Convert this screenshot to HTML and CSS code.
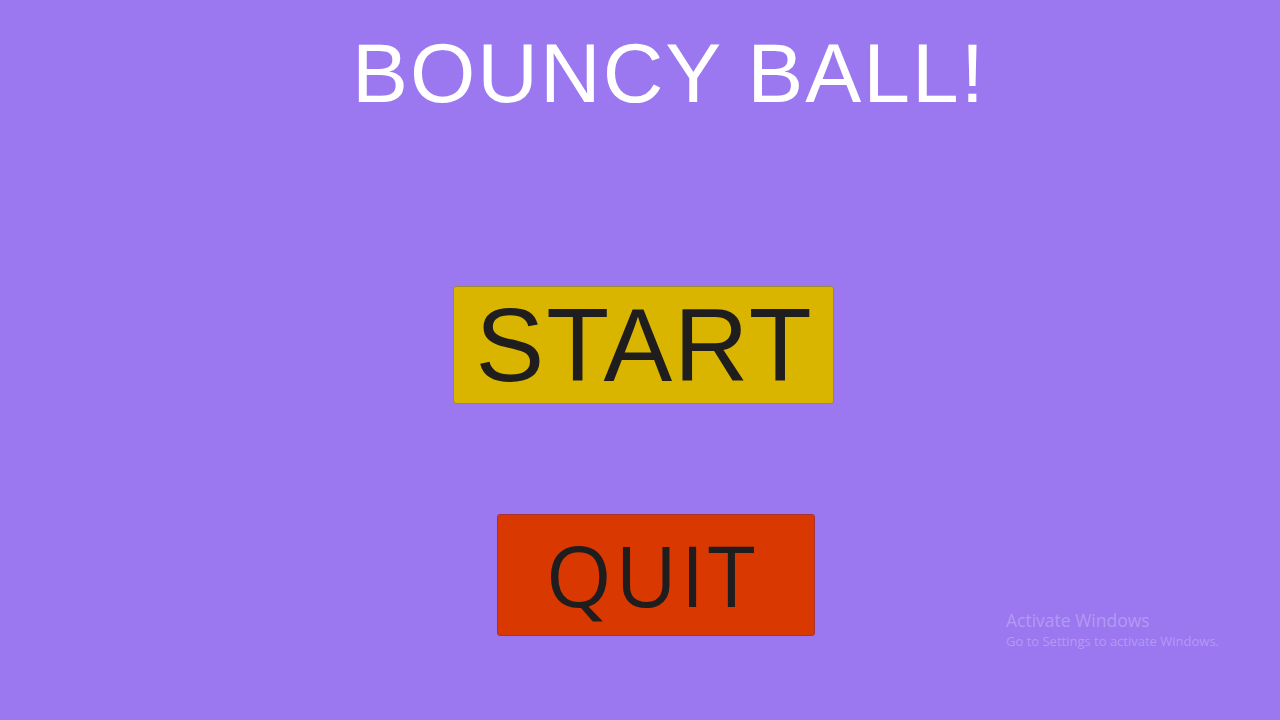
FILE: index.html
```html
<!DOCTYPE html>
<html>
<head>
<meta charset="utf-8">
<link rel="stylesheet" href="styles.css">
</head>
<body>
<main class="menu">
  <h1 class="title">BOUNCY BALL!</h1>
  <button class="btn btn-start">START</button>
  <button class="btn btn-quit">QUIT</button>
</main>
<div class="watermark">
  <div class="wm-title">Activate Windows</div>
  <div class="wm-sub">Go to Settings to activate Windows.</div>
</div>
</body>
</html>
```
FILE: styles.css
```css
html, body {
  margin: 0;
  padding: 0;
  width: 1280px;
  height: 720px;
  overflow: hidden;
  background: #9b78f0;
  font-family: "Liberation Sans", Arial, sans-serif;
}
.menu {
  display: flex;
  flex-direction: column;
  align-items: flex-start;
}
.title {
  margin: 31px 0 0 352px;
  font-size: 84px;
  letter-spacing: 2px;
  line-height: 1;
  font-weight: normal;
  color: #ffffff;
  white-space: nowrap;
}
.btn {
  display: flex;
  align-items: center;
  justify-content: center;
  box-sizing: border-box;
  font-family: "Liberation Sans", Arial, sans-serif;
  color: #1f1d1d;
  line-height: 1;
  padding: 0;
  border-radius: 3px;
}
.btn-start {
  margin: 171px 0 0 453px;
  width: 381px;
  height: 118px;
  font-size: 103px;
  letter-spacing: 2px;
  padding-left: 2px;
  background: #dab500;
  border: 1px solid #9c8a3a;
}
.btn-quit {
  margin: 110px 0 0 497px;
  width: 318px;
  height: 122px;
  font-family: "Open Sans", "Noto Sans", sans-serif;
  font-size: 85px;
  letter-spacing: 3.5px;
  padding-right: 8px;
  padding-bottom: 2px;
  background: #d93900;
  border: 1px solid #a8303a;
}
.watermark {
  position: absolute;
  left: 1006px;
  top: 608px;
  color: rgba(255, 255, 255, 0.26);
  font-family: "Open Sans", "Noto Sans", sans-serif;
}
.wm-title {
  font-size: 17.5px;
  line-height: 24px;
}
.wm-sub {
  font-size: 13px;
  line-height: 19px;
}
```
